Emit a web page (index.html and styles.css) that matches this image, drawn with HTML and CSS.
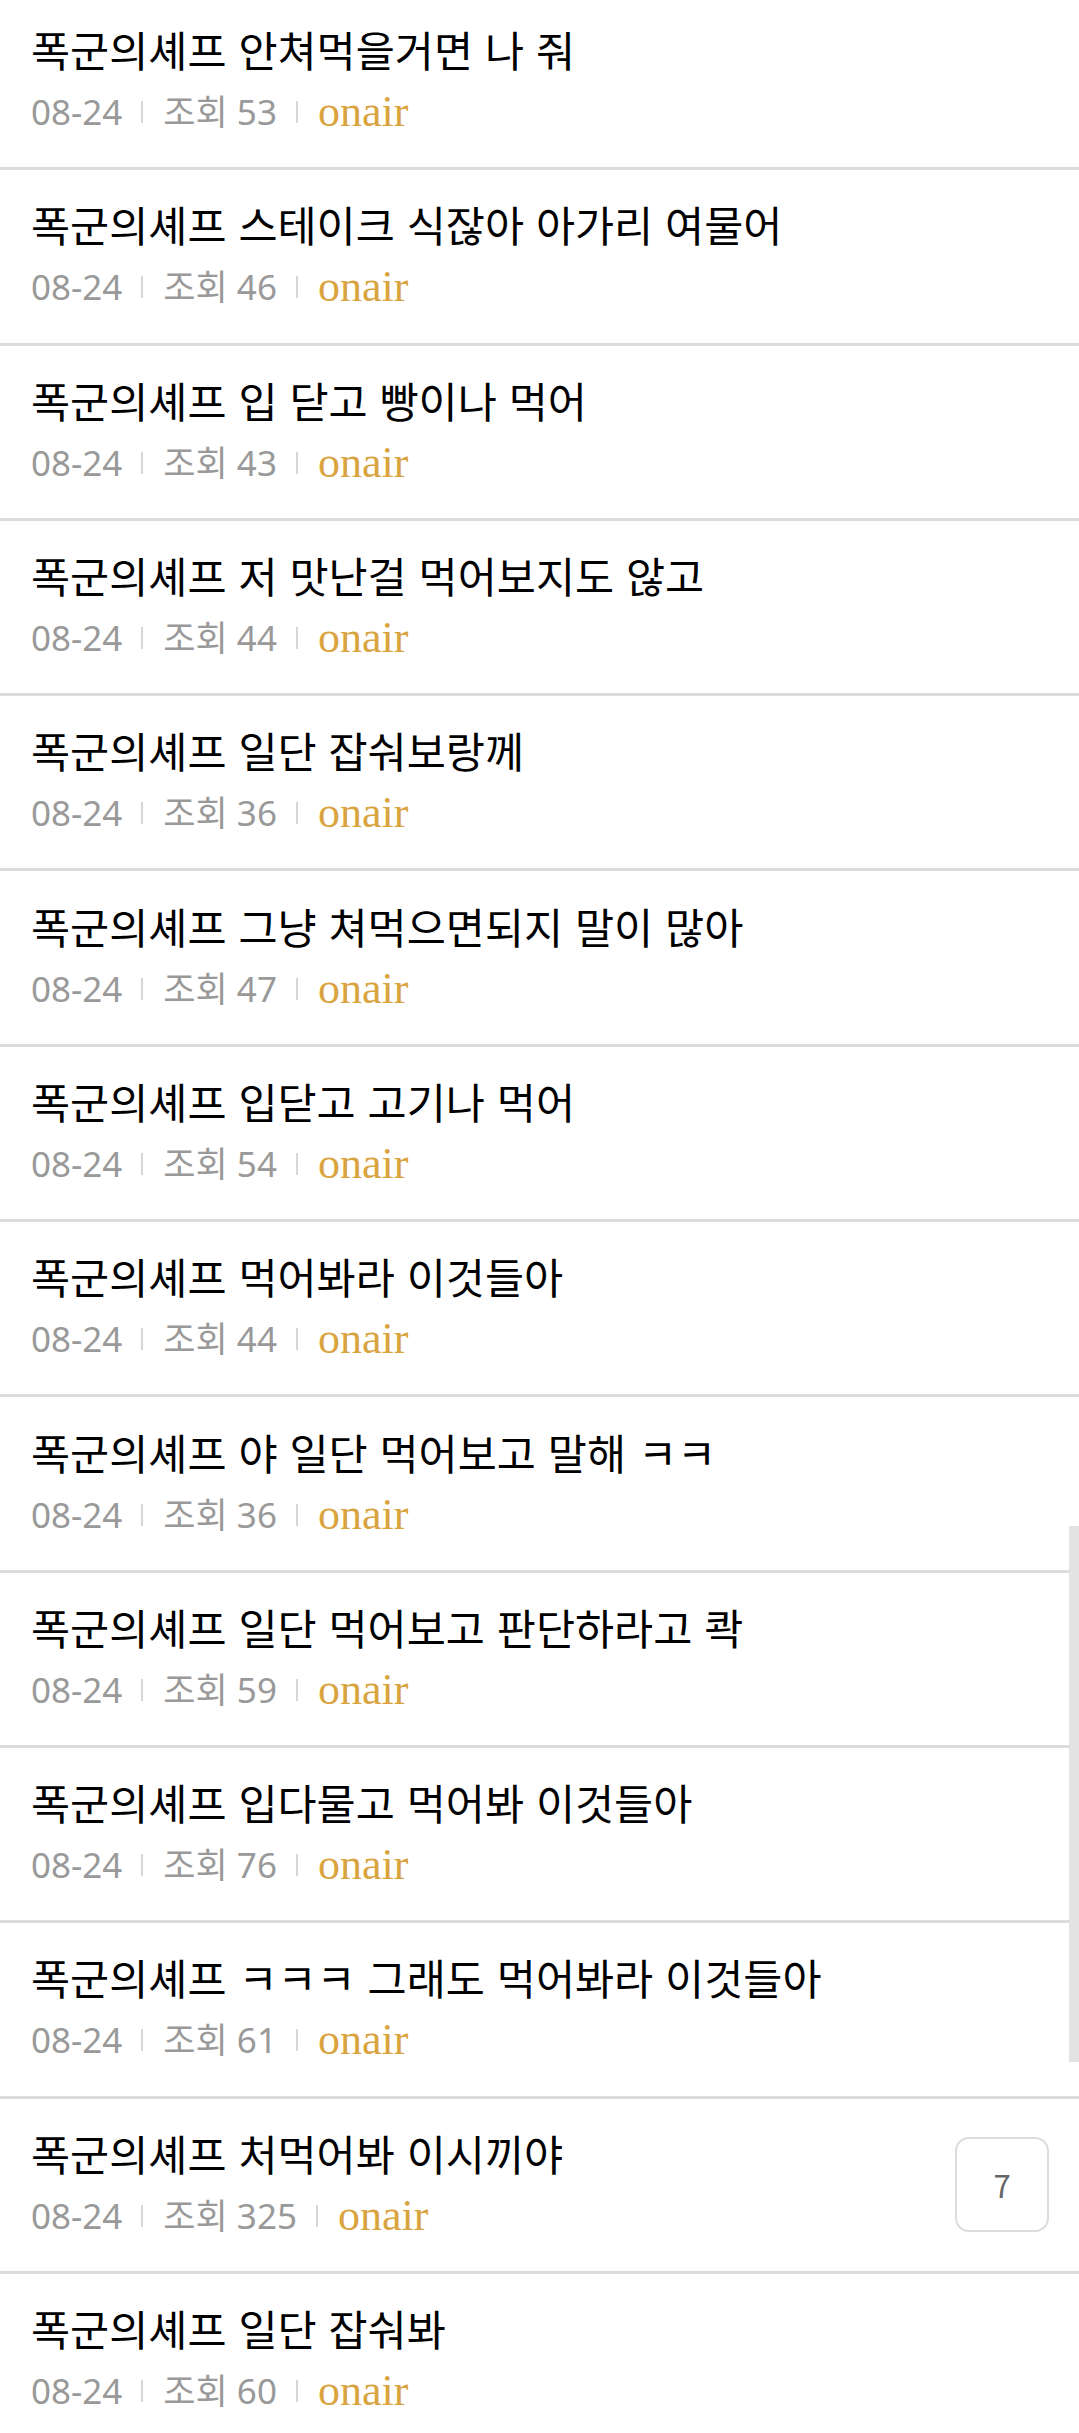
FILE: index.html
```html
<!DOCTYPE html>
<html lang="ko">
<head>
    <meta charset="UTF-8">
    <meta name="viewport" content="width=device-width, initial-scale=1.0">
    <title>폭군의셰프</title>
    <link rel="stylesheet" href="styles.css">
</head>
<body>
    <ul class="list">
        <li class="row"><div class="txt"><p class="title">폭군의셰프 안쳐먹을거면 나 줘</p><p class="meta"><span>08-24</span><i class="sep"></i><span>조회 53</span><i class="sep"></i><span class="nick">onair</span></p></div></li>
        <li class="row"><div class="txt"><p class="title">폭군의셰프 스테이크 식잖아 아가리 여물어</p><p class="meta"><span>08-24</span><i class="sep"></i><span>조회 46</span><i class="sep"></i><span class="nick">onair</span></p></div></li>
        <li class="row"><div class="txt"><p class="title">폭군의셰프 입 닫고 빵이나 먹어</p><p class="meta"><span>08-24</span><i class="sep"></i><span>조회 43</span><i class="sep"></i><span class="nick">onair</span></p></div></li>
        <li class="row"><div class="txt"><p class="title">폭군의셰프 저 맛난걸 먹어보지도 않고</p><p class="meta"><span>08-24</span><i class="sep"></i><span>조회 44</span><i class="sep"></i><span class="nick">onair</span></p></div></li>
        <li class="row"><div class="txt"><p class="title">폭군의셰프 일단 잡숴보랑께</p><p class="meta"><span>08-24</span><i class="sep"></i><span>조회 36</span><i class="sep"></i><span class="nick">onair</span></p></div></li>
        <li class="row"><div class="txt"><p class="title">폭군의셰프 그냥 쳐먹으면되지 말이 많아</p><p class="meta"><span>08-24</span><i class="sep"></i><span>조회 47</span><i class="sep"></i><span class="nick">onair</span></p></div></li>
        <li class="row"><div class="txt"><p class="title">폭군의셰프 입닫고 고기나 먹어</p><p class="meta"><span>08-24</span><i class="sep"></i><span>조회 54</span><i class="sep"></i><span class="nick">onair</span></p></div></li>
        <li class="row"><div class="txt"><p class="title">폭군의셰프 먹어봐라 이것들아</p><p class="meta"><span>08-24</span><i class="sep"></i><span>조회 44</span><i class="sep"></i><span class="nick">onair</span></p></div></li>
        <li class="row"><div class="txt"><p class="title">폭군의셰프 야 일단 먹어보고 말해 ㅋㅋ</p><p class="meta"><span>08-24</span><i class="sep"></i><span>조회 36</span><i class="sep"></i><span class="nick">onair</span></p></div></li>
        <li class="row"><div class="txt"><p class="title">폭군의셰프 일단 먹어보고 판단하라고 콱</p><p class="meta"><span>08-24</span><i class="sep"></i><span>조회 59</span><i class="sep"></i><span class="nick">onair</span></p></div></li>
        <li class="row"><div class="txt"><p class="title">폭군의셰프 입다물고 먹어봐 이것들아</p><p class="meta"><span>08-24</span><i class="sep"></i><span>조회 76</span><i class="sep"></i><span class="nick">onair</span></p></div></li>
        <li class="row"><div class="txt"><p class="title">폭군의셰프 ㅋㅋㅋ 그래도 먹어봐라 이것들아</p><p class="meta"><span>08-24</span><i class="sep"></i><span>조회 61</span><i class="sep"></i><span class="nick">onair</span></p></div></li>
        <li class="row"><div class="txt"><p class="title">폭군의셰프 처먹어봐 이시끼야</p><p class="meta"><span>08-24</span><i class="sep"></i><span>조회 325</span><i class="sep"></i><span class="nick">onair</span></p></div><span class="cmt">7</span></li>
        <li class="row"><div class="txt"><p class="title">폭군의셰프 일단 잡숴봐</p><p class="meta"><span>08-24</span><i class="sep"></i><span>조회 60</span><i class="sep"></i><span class="nick">onair</span></p></div></li>
    </ul>

    <div class="scrollbar"></div>
</body>
</html>
```

FILE: styles.css
```css
body {
    margin: 0;
    padding: 0;
    background: #fff;
    font-family: "Noto Sans CJK KR", "Noto Sans", sans-serif;
    overflow: hidden;
}

.list {
    list-style: none;
    margin: -5px 0 0 0;
    padding: 0;
}

.row {
    display: flex;
    align-items: center;
    height: 167.3px;
    padding: 0 30px 5px 31px;
    border-bottom: 3px solid #dcdcdc;
}

.txt {
    flex: 1;
}

.title {
    margin: 0;
    font-size: 42.5px;
    line-height: 52px;
    color: #000;
}

.meta {
    display: flex;
    align-items: center;
    margin: 15px 0 0 0;
    font-family: "Noto Sans", "Noto Sans CJK KR", sans-serif;
    font-size: 35px;
    line-height: 44px;
    color: #999;
}

.sep {
    width: 2px;
    height: 22px;
    background: #d6d6d6;
    margin: 0 20px 0 19px;
}

.nick {
    font-family: "Liberation Serif", serif;
    font-size: 44px;
    color: #d9a440;
}

.cmt {
    width: 90px;
    height: 91px;
    margin-top: 5px;
    border: 2px solid #dcdcdc;
    border-radius: 14px;
    display: flex;
    align-items: center;
    justify-content: center;
    font-size: 31px;
    color: #666;
}

.scrollbar {
    position: absolute;
    right: 0;
    top: 1526px;
    width: 10px;
    height: 536px;
    background: #e3e3e3;
}
```
